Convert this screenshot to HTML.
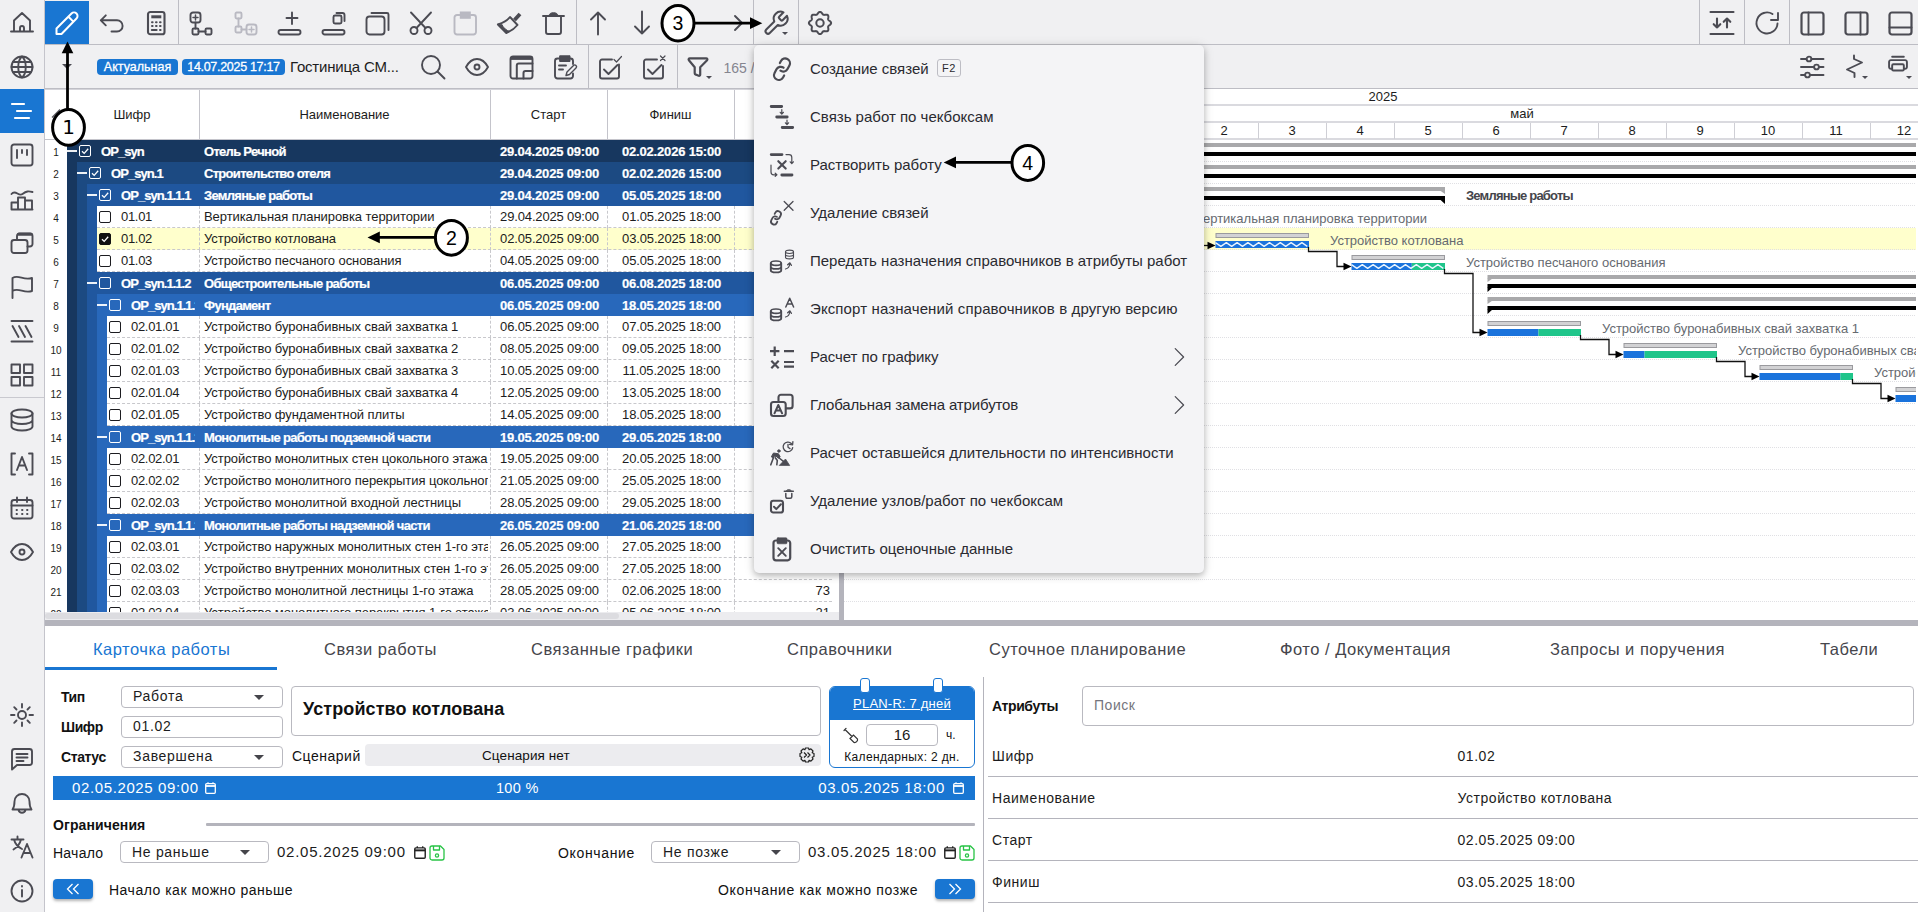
<!DOCTYPE html>
<html lang="ru"><head><meta charset="utf-8"><title>PLAN-R</title>
<style>
*{box-sizing:border-box;margin:0;padding:0}
html,body{width:1918px;height:912px;overflow:hidden;background:#fff}
body{font-family:"Liberation Sans",sans-serif;font-size:13px;color:#1c1c20;position:relative}
.abs{position:absolute}
svg{display:block;overflow:visible}
.ic{position:absolute;width:24px;height:24px;fill:none;stroke:#4b4b53;stroke-width:1.9;stroke-linecap:round;stroke-linejoin:round}
.ic.dis{stroke:#b9b9c2}
.ic.w{stroke:#fff}
#side{left:0;top:0;width:45px;height:912px;background:#f0f0f2;border-right:1px solid #c4c4cb}
#side .act{position:absolute;left:0;top:89px;width:44px;height:44px;background:#1976d2}
#side .hr{position:absolute;left:0;top:397px;width:44px;height:1px;background:#c9c9cf}
#tb1{left:45px;top:0;width:1873px;height:45px;background:#f0f0f2;border-bottom:1px solid #bdbdc4}
#tb2{left:45px;top:45px;width:1873px;height:44px;background:#f0f0f2;border-bottom:1px solid #bdbdc4}
.vs{position:absolute;top:0;width:1px;height:44px;background:#bdbdc4}
#edit{left:45px;top:1px;width:44px;height:43px;background:#1976d2}
.badge{position:absolute;top:59px;height:16px;border-radius:4px;background:#1976d2;color:#fff;font-size:12.5px;line-height:16px;-webkit-text-stroke:.3px #fff;text-align:center;white-space:nowrap}
#pname{left:290px;top:57px;letter-spacing:-.2px;font-size:15px;line-height:20px;color:#1c1c20;white-space:nowrap}
#cnt{left:723.5px;top:57.5px;font-size:14px;line-height:20px;color:#85858f;white-space:nowrap}
/* grid */
#grid{left:45px;top:89px;width:793px;height:523px;background:#fff;overflow:hidden;border-top:1px solid #d4d4da}
.gh{position:absolute;top:-1px;height:51px;border-left:1px solid #c4c4cb;font-size:13px;line-height:52px;padding-right:2px;text-align:center;color:#1c1c20;white-space:nowrap}
#ghb{left:0;top:49px;width:793px;height:1px;background:#c4c4cb}
.rn{position:absolute;left:0;width:22px;height:22px;line-height:22px;font-size:10px;text-align:center;color:#1c1c20;padding-top:2px}
.row{position:absolute;left:22px;width:765px;height:22px;overflow:hidden;white-space:nowrap}
.row .bg{position:absolute;top:0;height:22px;right:0}
.c{position:absolute;top:0;height:22px;line-height:22px;font-size:13px;overflow:hidden;white-space:nowrap}
.sum .c{color:#fff;font-weight:bold;letter-spacing:-0.7px;line-height:24px;-webkit-text-stroke:.2px #fff}
.sum .c.cd{letter-spacing:-0.95px}
.sum .c.d{letter-spacing:-0.17px}
.tsk .c.d{letter-spacing:-0.15px}
.tsk .c.cd{letter-spacing:-0.3px}
.tsk .c.nm{letter-spacing:-0.07px}
.tsk .c{color:#1c1c20}
.tsk .bg{background:#fff;border-bottom:1px dashed #c8c8cc}
.tsk.sel .bg{background:#ffffcc}
.vd{position:absolute;top:0;width:0;height:22px;border-left:1px dashed #c8c8cc}
.cb{position:absolute;top:5px;width:12px;height:12px;border:1px solid #1c1c20;border-radius:2px;background:#fff}
.sum .cb{border-color:#fff;background:transparent}
.cb svg{position:absolute;left:0;top:0;width:10px;height:10px;fill:none;stroke:#fff;stroke-width:1.3}
.cb.k{background:#111;border-color:#111}
.mn{position:absolute;top:10px;width:10px;height:2px;background:#fff;opacity:.92}

#gantt{left:844px;top:89px;width:1074px;height:531px;background:#fff;overflow:hidden}
#gantt .hl{position:absolute;left:0;width:1074px;height:2px;background:#dadadf}
#gantt .hd{position:absolute;font-size:13px;line-height:16px;color:#1c1c20;text-align:center;white-space:nowrap}
#gantt .dv{position:absolute;top:34px;width:1px;height:16px;background:#cfcfd5}
#gantt .rl{position:absolute;left:0;width:1073px;height:0;border-top:1px dotted #e0e0e4}
#gantt .lb{position:absolute;font-size:13px;line-height:16px;color:#666a70;white-space:nowrap}
#gantt .lb.b{font-weight:bold;color:#45454b;letter-spacing:-.8px}

#menu{left:754px;top:45px;width:450px;height:528px;background:#f4f4f6;border-radius:5px;box-shadow:0 3px 6px rgba(0,0,0,.22),0 1px 12px rgba(0,0,0,.12)}
#menu .mi{position:absolute;left:56px;height:20px;line-height:20px;font-size:15px;color:#2a2a30;white-space:nowrap}
#menu .kbd{position:absolute;left:183px;top:14px;width:24px;height:18px;border:1px solid #bdbdc4;border-radius:3px;font-size:11px;line-height:16px;text-align:center;color:#2a2a30;letter-spacing:.5px}

.tab{position:absolute;top:639px;height:20px;line-height:20px;font-size:16.5px;color:#45454b;white-space:nowrap;letter-spacing:.5px}
.tab.on{color:#1976d2}
#tabul{left:45px;top:667px;width:232px;height:3px;background:#1976d2}
.lbl{position:absolute;font-size:14px;line-height:18px;color:#111;white-space:nowrap}
.lbl.b{font-weight:bold;letter-spacing:-.4px}
.inp{position:absolute;height:22px;border:1px solid #b9b9c0;border-radius:4px;background:#fff;font-size:14px;line-height:19px;padding-left:11px;color:#1c1c20;white-space:nowrap;letter-spacing:.7px}
.inp svg{position:absolute;right:18px;top:8px;width:10px;height:5px}
#title{left:291px;top:686px;width:530px;height:50px;border:1px solid #b9b9c0;border-radius:4px;background:#fff;font-size:18px;font-weight:bold;line-height:44px;padding-left:11px;color:#111;letter-spacing:.1px}
#scen{left:365px;top:744px;width:456px;height:22px;border-radius:4px;background:#ececef}
#bar{left:53px;top:776px;width:922px;height:24px;background:#1976d2;color:#fff;font-size:15px;line-height:24px;letter-spacing:.62px}
#card{left:829px;top:686px;width:146px;height:82px;border:1px solid #1976d2;border-radius:6px;background:#fff;overflow:hidden}
#card .hd{position:absolute;left:0;top:0;width:144px;height:33px;background:#1976d2;color:#fff;font-size:13px;line-height:33px;text-align:center;text-decoration:underline;letter-spacing:.2px}
.pin{position:absolute;top:678px;width:10px;height:15px;border:1.500px solid #1976d2;border-radius:3px;background:#fff}
.btn{position:absolute;top:879px;width:40px;height:20px;border-radius:4px;background:#1976d2;box-shadow:0 2px 3px rgba(0,0,0,.3)}
.btn svg{position:absolute;left:13px;top:4px;width:14px;height:12px;fill:none;stroke:#fff;stroke-width:1.300}
.dt{position:absolute;font-size:15px;line-height:20px;color:#1c1c20;white-space:nowrap;letter-spacing:.75px}
.ar{position:absolute;left:988px;width:930px;height:1px;background:#b4b4bc}
.al{position:absolute;font-size:14px;line-height:18px;color:#1c1c20;white-space:nowrap;letter-spacing:.55px}
</style></head>
<body>
<div id="side" class="abs">
<div class="act"></div>
<div class="hr"></div><svg class="ic " viewBox="0 0 24 24" style="left:10px;top:10px;width:24px;height:24px;"><path d="M1 21.5h22M4 21.5V10.5L12 3l8 7.5v11M10 21.5v-3.5a2 2 0 0 1 4 0v3.5"/></svg><svg class="ic " viewBox="0 0 24 24" style="left:10px;top:55px;width:24px;height:24px;"><circle cx="12" cy="12" r="10.5"/><path d="M1.5 12h21M3 7h18M3 17h18M12 1.5c-5 4-5 17 0 21M12 1.5c5 4 5 17 0 21"/></svg><svg class="ic w" viewBox="0 0 24 24" style="left:10px;top:99px;width:24px;height:24px;"><path d="M2 5h12M7 12h14M5 19h14" stroke-width="2.2"/></svg><svg class="ic " viewBox="0 0 24 24" style="left:10px;top:143px;width:24px;height:24px;"><rect x="1.5" y="1.5" width="21" height="21" rx="2.5"/><path d="M7 7v8M12 7v3M17 7v5"/></svg><svg class="ic " viewBox="0 0 24 24" style="left:10px;top:187px;width:24px;height:24px;"><path d="M1.5 7c4-5 7 3 11 0s6-3 10-2M1.5 22.5h21M1.5 22.5v-7h6.5v7M8 22.5v-12h7v12M15 22.5v-9h7v9"/></svg><svg class="ic " viewBox="0 0 24 24" style="left:10px;top:231px;width:24px;height:24px;"><path d="M7 9V5a2.500 2.500 0 0 1 2.500-2.500h10.500a2.500 2.500 0 0 1 2.500 2.500v8a2.500 2.500 0 0 1-2.500 2.500h-2.500"/><path d="M8.500 3.300h12.500" stroke-width="3" /><rect x="1.500" y="9" width="16" height="13" rx="2.500"/></svg><svg class="ic " viewBox="0 0 24 24" style="left:10px;top:275px;width:24px;height:24px;"><path d="M2.500 23V3c6-4 11 3 19.500 0v13c-8 3-13.500-4-19.500 0"/></svg><svg class="ic " viewBox="0 0 24 24" style="left:10px;top:319px;width:24px;height:24px;"><path d="M1.500 2h21M1.500 22.500h21M2.500 7l6 11M9 7l6 11M15.500 7l6 11"/></svg><svg class="ic " viewBox="0 0 24 24" style="left:10px;top:363px;width:24px;height:24px;"><rect x="1.5" y="1.5" width="8.5" height="8.5"/><rect x="14" y="1.5" width="8.5" height="8.5"/><rect x="1.5" y="14" width="8.5" height="8.5"/><rect x="14" y="14" width="8.5" height="8.5"/></svg><svg class="ic " viewBox="0 0 24 24" style="left:10px;top:408px;width:24px;height:24px;"><ellipse cx="12" cy="5.5" rx="10.500" ry="4"/><path d="M1.500 5.500v13c0 2.200 4.700 4 10.500 4s10.500-1.800 10.500-4v-13M1.500 12c0 2.200 4.700 4 10.500 4s10.500-1.800 10.500-4"/></svg><svg class="ic " viewBox="0 0 24 24" style="left:10px;top:452px;width:24px;height:24px;"><path d="M5 1.500H1.500v21H5M19 1.500h3.500v21H19M7 18l5-13 5 13M8.700 13.500h6.600"/></svg><svg class="ic " viewBox="0 0 24 24" style="left:10px;top:496px;width:24px;height:24px;"><rect x="1.500" y="4" width="21" height="18.500" rx="2.500"/><path d="M1.500 9.500h21M7 1.500V6M17 1.500V6"/><path d="M6.500 14h.5M12 14h.5M17 14h.5M6.500 18h.5M12 18h.5M17 18h.5" stroke-width="1.800"/></svg><svg class="ic " viewBox="0 0 24 24" style="left:10px;top:540px;width:24px;height:24px;"><path d="M1 12c3-5.500 7-8 11-8s8 2.500 11 8c-3 5.500-7 8-11 8s-8-2.500-11-8z"/><circle cx="12" cy="12" r="2.500"/></svg><svg class="ic " viewBox="0 0 24 24" style="left:10px;top:703px;width:24px;height:24px;"><circle cx="12" cy="12" r="4"/><path d="M12 1v3.500M12 19.500V23M1 12h3.500M19.500 12H23M4.200 4.200l2.300 2.300M17.500 17.500l2.300 2.300M4.200 19.800l2.300-2.300M17.500 6.500l2.300-2.300"/></svg><svg class="ic " viewBox="0 0 24 24" style="left:10px;top:747px;width:24px;height:24px;"><path d="M2 22.500V4.500a2.500 2.500 0 0 1 2.500-2.500h15a2.500 2.500 0 0 1 2.500 2.500v11a2.500 2.500 0 0 1-2.500 2.500H7z"/><path d="M6.500 7h11M6.500 10.500h11M6.500 14h7"/></svg><svg class="ic " viewBox="0 0 24 24" style="left:10px;top:791px;width:24px;height:24px;"><path d="M2.500 18.500c1.500-2 2-3.500 2-8a7.500 7.500 0 0 1 15 0c0 4.500.5 6 2 8zM8.500 19a3.600 3.600 0 0 0 7 0"/></svg><svg class="ic " viewBox="0 0 24 24" style="left:10px;top:835px;width:24px;height:24px;"><path d="M1.500 4.500h12M7.500 1.500v3M3.500 14.500c4-2.500 6.500-6 7.500-10M4 4.500c1 4 4 7.500 8 9.500M11.500 22.500l5.500-13.500 5.500 13.500M13.500 18h7"/></svg><svg class="ic " viewBox="0 0 24 24" style="left:10px;top:879px;width:24px;height:24px;"><circle cx="12" cy="12" r="10.500"/><path d="M12 11v6.500M12 7v.5" stroke-width="1.900"/></svg></div>
<div id="tb1" class="abs"></div>
<div id="tb2" class="abs"></div>
<div id="edit" class="abs"></div><svg class="ic w" viewBox="0 0 24 24" style="left:55px;top:11px;width:24px;height:24px;"><path d="M1.500 23v-5.500L16.500 2.500a3.400 3.400 0 0 1 5 5L6.500 23zM13.500 5.800l4.800 4.800" stroke-width="2"/></svg><svg class="ic " viewBox="0 0 24 24" style="left:100px;top:11px;width:24px;height:24px;"><path d="M.8 9.300H17a5.600 5.600 0 0 1 0 11.200h-5.500M5.800 4.300l-5 5 5 5"/></svg><svg class="ic " viewBox="0 0 24 24" style="left:144px;top:11px;width:24px;height:24px;"><rect x="4" y="1" width="16.500" height="22.300" rx="2.300" stroke-width="2.100"/><path d="M7.300 5.800h10" stroke-width="3" stroke-linecap="butt"/><path d="M8 11.200h.6M12 11.200h.6M16 11.200h.6M8 15h.6M12 15h.6M16 15h.6M16 19h.6" stroke-width="2"/><path d="M7.800 19h4.800" stroke-width="2"/></svg><svg class="ic " viewBox="0 0 24 24" style="left:189px;top:11px;width:24px;height:24px;"><rect x="1.500" y="1.500" width="10" height="10" rx="2.500"/><path d="M6.500 4v5M4 6.500h5" stroke-width="1.500"/><path d="M6.500 11.500v6M9.500 20.500h7"/><rect x="3.500" y="17.500" width="6" height="6" rx="1.200"/><rect x="16.500" y="17.500" width="6" height="6" rx="1.200"/></svg><svg class="ic dis" viewBox="0 0 24 24" style="left:233px;top:11px;width:24px;height:24px;"><rect x="2.500" y="1.500" width="6" height="6" rx="1.200"/><rect x="2.500" y="15.500" width="6" height="6" rx="1.200"/><path d="M5.500 7.500v8M8.500 18.500h5"/><rect x="13.500" y="13.500" width="10" height="10" rx="2.500"/><path d="M18.500 16v5M16 18.500h5" stroke-width="1.500"/></svg><svg class="ic " viewBox="0 0 24 24" style="left:277px;top:11px;width:24px;height:24px;"><path d="M15 1.500V13M9.500 7h11"/><rect x="1.500" y="19" width="22" height="4.500" rx="2.200"/></svg><svg class="ic " viewBox="0 0 24 24" style="left:321px;top:11px;width:24px;height:24px;"><rect x="1.500" y="19" width="22" height="4.500" rx="2.200"/><rect x="12.500" y="4.500" width="8" height="8" rx="1.500"/><path d="M15.500 2h6a2 2 0 0 1 2 2v6"/></svg><svg class="ic " viewBox="0 0 24 24" style="left:365px;top:11px;width:24px;height:24px;"><rect x="1.500" y="5.500" width="18" height="18" rx="3"/><path d="M6.500 2h15.500a1.500 1.500 0 0 1 1.500 1.500v15.500"/></svg><svg class="ic " viewBox="0 0 24 24" style="left:409px;top:11px;width:24px;height:24px;"><circle cx="5" cy="19.500" r="3.500"/><circle cx="19" cy="19.500" r="3.500"/><path d="M2 1.500L16.500 17M22 1.500L7.500 17"/></svg><svg class="ic dis" viewBox="0 0 24 24" style="left:453px;top:11px;width:24px;height:24px;"><path d="M6.500 4H4a2.500 2.500 0 0 0-2.500 2.500V21A2.500 2.500 0 0 0 4 23.500h16.500A2.500 2.500 0 0 0 23 21V6.500A2.500 2.500 0 0 0 20.500 4H18"/><path d="M6.800 .5h11v7.300h-11z" fill="#b9b9c2" stroke="none"/></svg><svg class="ic " viewBox="0 0 24 24" style="left:497px;top:11px;width:24px;height:24px;"><path d="M23 3l-5.500 6" stroke-width="3.800" stroke-linecap="butt"/><path d="M13 6l7.500 8c-3 3.700-6.800 6.300-11.200 8L.9 13.500C5.500 12 10 9.700 13 6z"/><path d="M.9 13.500l8.400 8.500 3.700-1.600c-3.300-.6-6.600-3.400-8.200-6.900z" fill="#4b4b53" stroke-width="1"/></svg><svg class="ic " viewBox="0 0 24 24" style="left:541px;top:11px;width:24px;height:24px;"><path d="M2 5h21M5 5v16a2 2 0 0 0 2 2h11a2 2 0 0 0 2-2V5"/><path d="M8 4.600c.5-2.200 2-2.900 4.500-2.900s4 .7 4.500 2.900z" fill="#4b4b53" stroke-width="1"/></svg><svg class="ic " viewBox="0 0 24 24" style="left:586px;top:11px;width:24px;height:24px;"><path d="M12 23.500V1.500M5 8.500l7-7 7 7"/></svg><svg class="ic " viewBox="0 0 24 24" style="left:630px;top:11px;width:24px;height:24px;"><path d="M12 .5v22M5 15.500l7 7 7-7"/></svg><svg class="ic " viewBox="0 0 24 24" style="left:674px;top:11px;width:24px;height:24px;"><path d="M23 12H1M8 5l-7 7 7 7"/></svg><svg class="ic " viewBox="0 0 24 24" style="left:719px;top:11px;width:24px;height:24px;"><path d="M1 12h22M16 5l7 7-7 7"/></svg><svg class="ic " viewBox="0 0 24 24" style="left:764px;top:11px;width:24px;height:24px;"><g transform="translate(12,12.300) scale(1.160) translate(-12,-12)" stroke-width="1.750"><path d="M14.700 6.300a1 1 0 0 0 0 1.400l1.600 1.600a1 1 0 0 0 1.400 0l3.770-3.770a6 6 0 0 1-7.940 7.940l-6.910 6.910a2.120 2.120 0 0 1-3-3l6.910-6.910a6 6 0 0 1 7.940-7.940l-3.760 3.760z"/></g></svg><svg class="ic " viewBox="0 0 24 24" style="left:808px;top:11px;width:24px;height:24px;"><path d="M12.00 0.90L12.43 0.96L12.85 1.14L13.25 1.43L13.62 1.79L13.95 2.19L14.26 2.61L14.54 3.00L14.82 3.34L15.10 3.60L15.41 3.78L15.75 3.87L16.14 3.88L16.57 3.84L17.05 3.76L17.56 3.69L18.08 3.63L18.59 3.64L19.07 3.72L19.50 3.89L19.85 4.15L20.11 4.50L20.28 4.93L20.36 5.41L20.37 5.92L20.31 6.44L20.24 6.95L20.16 7.43L20.12 7.86L20.13 8.25L20.22 8.59L20.40 8.90L20.66 9.18L21.00 9.46L21.39 9.74L21.81 10.05L22.21 10.38L22.57 10.75L22.86 11.15L23.04 11.57L23.10 12.00L23.04 12.43L22.86 12.85L22.57 13.25L22.21 13.62L21.81 13.95L21.39 14.26L21.00 14.54L20.66 14.82L20.40 15.10L20.22 15.41L20.13 15.75L20.12 16.14L20.16 16.57L20.24 17.05L20.31 17.56L20.37 18.08L20.36 18.59L20.28 19.07L20.11 19.50L19.85 19.85L19.50 20.11L19.07 20.28L18.59 20.36L18.08 20.37L17.56 20.31L17.05 20.24L16.57 20.16L16.14 20.12L15.75 20.13L15.41 20.22L15.10 20.40L14.82 20.66L14.54 21.00L14.26 21.39L13.95 21.81L13.62 22.21L13.25 22.57L12.85 22.86L12.43 23.04L12.00 23.10L11.57 23.04L11.15 22.86L10.75 22.57L10.38 22.21L10.05 21.81L9.74 21.39L9.46 21.00L9.18 20.66L8.90 20.40L8.59 20.22L8.25 20.13L7.86 20.12L7.43 20.16L6.95 20.24L6.44 20.31L5.92 20.37L5.41 20.36L4.93 20.28L4.50 20.11L4.15 19.85L3.89 19.50L3.72 19.07L3.64 18.59L3.63 18.08L3.69 17.56L3.76 17.05L3.84 16.57L3.88 16.14L3.87 15.75L3.78 15.41L3.60 15.10L3.34 14.82L3.00 14.54L2.61 14.26L2.19 13.95L1.79 13.62L1.43 13.25L1.14 12.85L0.96 12.43L0.90 12.00L0.96 11.57L1.14 11.15L1.43 10.75L1.79 10.38L2.19 10.05L2.61 9.74L3.00 9.46L3.34 9.18L3.60 8.90L3.78 8.59L3.87 8.25L3.88 7.86L3.84 7.43L3.76 6.95L3.69 6.44L3.63 5.92L3.64 5.41L3.72 4.93L3.89 4.50L4.15 4.15L4.50 3.89L4.93 3.72L5.41 3.64L5.92 3.63L6.44 3.69L6.95 3.76L7.43 3.84L7.86 3.88L8.25 3.87L8.59 3.78L8.90 3.60L9.18 3.34L9.46 3.00L9.74 2.61L10.05 2.19L10.38 1.79L10.75 1.43L11.15 1.14L11.57 0.96z" stroke-width="2"/><circle cx="12" cy="12" r="3.700" stroke-width="2"/></svg><svg class="ic " viewBox="0 0 24 24" style="left:1710px;top:11px;width:24px;height:24px;"><path d="M.5 1h23M.5 23h23M7 7.500v9M3.700 13.200l3.300 3.300 3.300-3.300M17 16.500v-9M13.700 10.800l3.300-3.300 3.300 3.300" stroke-width="2.100"/></svg><svg class="ic " viewBox="0 0 24 24" style="left:1755px;top:11px;width:24px;height:24px;"><path d="M22.500 12.500A10.500 10.500 0 1 1 17.500 3M23 2v7h-7"/></svg><svg class="ic " viewBox="0 0 24 24" style="left:1800px;top:11px;width:24px;height:24px;"><rect x="1.500" y="1.500" width="22" height="22" rx="2.500" stroke-width="2.200"/><path d="M8.500 1.500v22"/></svg><svg class="ic " viewBox="0 0 24 24" style="left:1844px;top:11px;width:24px;height:24px;"><rect x="1.500" y="1.500" width="22" height="22" rx="2.500" stroke-width="2.200"/><path d="M16.500 1.500v22"/></svg><svg class="ic " viewBox="0 0 24 24" style="left:1888px;top:11px;width:24px;height:24px;"><rect x="1.500" y="1.500" width="22" height="22" rx="2.500" stroke-width="2.200"/><path d="M1.500 16.500h22"/></svg>
<div class="vs" style="left:178px"></div>
<div class="vs" style="left:576px"></div>
<div class="vs" style="left:753px"></div>
<div class="vs" style="left:798px"></div>
<div class="vs" style="left:1699px"></div>
<div class="vs" style="left:1744px"></div>
<div class="vs" style="left:1789px"></div>
<svg class="abs" style="left:782px;top:31.5px;width:6px;height:3px" viewBox="0 0 6 3"><path d="M0 0h6L3 3z" fill="#4b4b53"/></svg><svg class="ic " viewBox="0 0 24 24" style="left:421px;top:55px;width:24px;height:24px;"><circle cx="10" cy="10" r="9"/><path d="M16.500 16.500l7 7"/></svg><svg class="ic " viewBox="0 0 24 24" style="left:465px;top:55px;width:24px;height:24px;"><path d="M1 12c3-5.500 7-8 11-8s8 2.500 11 8c-3 5.500-7 8-11 8s-8-2.500-11-8z"/><circle cx="12" cy="12" r="2.500"/></svg><svg class="ic " viewBox="0 0 24 24" style="left:509px;top:55px;width:24px;height:24px;"><rect x="1.500" y="1.500" width="22" height="22" rx="2.500"/><path d="M1.500 3.300h22" stroke-width="3.200" stroke-linecap="butt"/><path d="M7.800 23.500V10.500a2 2 0 0 1 2-2h13.700M14.500 23.500V18a2 2 0 0 1 2-2h7" stroke-width="2"/></svg><svg class="ic " viewBox="0 0 24 24" style="left:553px;top:55px;width:24px;height:24px;"><path d="M6.500 3.500H4.500a2.500 2.500 0 0 0-2.500 2.500v15a2.500 2.500 0 0 0 2.500 2.500h13a2.500 2.500 0 0 0 2.500-2.500v-2.500M17.500 3.500h0a2.500 2.500 0 0 1 2.500 2.500v3"/><path d="M7 .8h10v5.700H7z" fill="#4b4b53" stroke-width="1"/><path d="M6 10.500h7M6 14.500h4"/><path d="M13 20.500l1-3.500 6.500-6.500a1.700 1.700 0 0 1 2.500 2.500L16.500 19.500z" stroke-width="1.400"/></svg><svg class="ic " viewBox="0 0 24 24" style="left:598px;top:55px;width:24px;height:24px;"><path d="M21 9.500v12a2 2 0 0 1-2 2H4a2 2 0 0 1-2-2v-15a2 2 0 0 1 2-2h10"/><path d="M6 14.500l4.500 4.500 9-9" stroke-width="1.900"/><path d="M16 4.500l2.500 2.500 5-5.500" stroke-width="1.200"/></svg><svg class="ic " viewBox="0 0 24 24" style="left:642px;top:55px;width:24px;height:24px;"><path d="M21 11v10.500a2 2 0 0 1-2 2H4a2 2 0 0 1-2-2v-15a2 2 0 0 1 2-2h11"/><path d="M6 14.500l4.500 4.500 9-9" stroke-width="1.900"/><path d="M18.500 1l4.500 4.500M23 1l-4.500 4.500" stroke-width="1.200"/></svg><svg class="ic " viewBox="0 0 24 24" style="left:685.8px;top:55px;width:24px;height:24px;"><path d="M3.800 3.300H20.200a1.200 1.200 0 0 1 .9 2L14.200 12.300V19.800a1.100 1.100 0 0 1-1.500 1L9.700 19.600a1.500 1.500 0 0 1-1-1.400V12.300L2.900 5.300a1.200 1.200 0 0 1 .9-2z" stroke-width="2.200"/></svg><svg class="ic " viewBox="0 0 24 24" style="left:1800px;top:55px;width:24px;height:24px;"><path d="M1 4h5.500M11.500 4h12M1 12h13M19 12h4.500M1 20h4M10 20h13.500"/><circle cx="9" cy="4" r="2.400"/><circle cx="16.500" cy="12" r="2.400"/><circle cx="7.500" cy="20" r="2.400"/></svg><svg class="ic " viewBox="0 0 24 24" style="left:1845px;top:55px;width:24px;height:24px;"><path d="M9 .5v3.500l8 3.500-15 7 7.500 3.500v4"/></svg>
<div class="vs" style="left:588px;top:45px"></div>
<div class="vs" style="left:677px;top:45px"></div>
<svg class="abs" style="left:705.8px;top:75.5px;width:6px;height:3px" viewBox="0 0 6 3"><path d="M0 0h6L3 3z" fill="#4b4b53"/></svg><svg class="ic " viewBox="0 0 24 24" style="left:1887.7px;top:55px;width:20px;height:20px;"><path d="M5 2h14M4.500 16.500h-1a2.200 2.200 0 0 1-2.200-2.200v-6a2.200 2.200 0 0 1 2.200-2.200h17a2.200 2.200 0 0 1 2.200 2.200v6a2.200 2.200 0 0 1-2.200 2.200h-1" stroke-width="2.300"/><rect x="5" y="11" width="14" height="7.500" rx="1.500" stroke-width="2.300"/></svg>
<svg class="abs" style="left:1862px;top:76px;width:6px;height:3px" viewBox="0 0 6 3"><path d="M0 0h6L3 3z" fill="#4b4b53"/></svg>
<svg class="abs" style="left:1906px;top:76px;width:6px;height:3px" viewBox="0 0 6 3"><path d="M0 0h6L3 3z" fill="#4b4b53"/></svg>
<svg class="abs" style="left:62px;top:64px;width:10px;height:5px" viewBox="0 0 10 5"><path d="M0 0h10L5 5z" fill="#4b4b53"/></svg>
<div class="badge" style="left:97px;width:81px">Актуальная</div>
<div class="badge" style="left:182px;width:103px;letter-spacing:-.3px">14.07.2025 17:17</div>
<div id="pname" class="abs">Гостиница СМ...</div>
<div id="cnt" class="abs">165 / 165</div>
<div id="grid" class="abs">
<div class="gh" style="left:21px;width:134px;border-left:0">Шифр</div>
<div class="gh" style="left:154px;width:292px">Наименование</div>
<div class="gh" style="left:445px;width:118px">Старт</div>
<div class="gh" style="left:562px;width:128px">Финиш</div>
<div class="gh" style="left:689px;width:104px"></div>
<div id="ghb" class="abs"></div>
<div class="rn" style="top:50px">1</div>
<div class="row sum" style="top:50px">
<div class="bg" style="left:0px;background:#17375f"></div>
<div class="mn" style="left:0px"></div>
<div class="cb" style="left:12px"><svg viewBox="0 0 10 10"><path d="M2 5.200l2.200 2.200L8.200 2.800"/></svg></div>
<div class="c cd" style="left:34px;width:94px">OP_syn</div>
<div class="c nm" style="left:137px;width:284px">Отель Речной</div>
<div class="c d" style="left:424px;width:117px;text-align:center">29.04.2025 09:00</div>
<div class="c d" style="left:541px;width:127px;text-align:center">02.02.2026 15:00</div></div>
<div class="rn" style="top:72px">2</div>
<div class="row sum" style="top:72px">
<div class="abs" style="left:0px;top:0;width:10px;height:22px;background:#17375f"></div>
<div class="bg" style="left:10px;background:#1c4a82"></div>
<div class="mn" style="left:10px"></div>
<div class="cb" style="left:22px"><svg viewBox="0 0 10 10"><path d="M2 5.200l2.200 2.200L8.200 2.800"/></svg></div>
<div class="c cd" style="left:44px;width:84px">OP_syn.1</div>
<div class="c nm" style="left:137px;width:284px">Строительство отеля</div>
<div class="c d" style="left:424px;width:117px;text-align:center">29.04.2025 09:00</div>
<div class="c d" style="left:541px;width:127px;text-align:center">02.02.2026 15:00</div></div>
<div class="rn" style="top:94px">3</div>
<div class="row sum" style="top:94px">
<div class="abs" style="left:0px;top:0;width:10px;height:22px;background:#17375f"></div>
<div class="abs" style="left:10px;top:0;width:10px;height:22px;background:#1c4a82"></div>
<div class="bg" style="left:20px;background:#20579f"></div>
<div class="mn" style="left:20px"></div>
<div class="cb" style="left:32px"><svg viewBox="0 0 10 10"><path d="M2 5.200l2.200 2.200L8.200 2.800"/></svg></div>
<div class="c cd" style="left:54px;width:74px">OP_syn.1.1.1</div>
<div class="c nm" style="left:137px;width:284px">Земляные работы</div>
<div class="c d" style="left:424px;width:117px;text-align:center">29.04.2025 09:00</div>
<div class="c d" style="left:541px;width:127px;text-align:center">05.05.2025 18:00</div></div>
<div class="rn" style="top:116px">4</div>
<div class="row tsk" style="top:116px">
<div class="abs" style="left:0px;top:0;width:10px;height:22px;background:#17375f"></div>
<div class="abs" style="left:10px;top:0;width:10px;height:22px;background:#1c4a82"></div>
<div class="abs" style="left:20px;top:0;width:10px;height:22px;background:#20579f"></div>
<div class="bg" style="left:30px"></div>
<div class="cb" style="left:32px"></div>
<div class="c cd" style="left:54px;width:74px">01.01</div>
<div class="c nm" style="left:137px;width:284px">Вертикальная планировка территории</div>
<div class="c d" style="left:424px;width:117px;text-align:center">29.04.2025 09:00</div>
<div class="c d" style="left:541px;width:127px;text-align:center">01.05.2025 18:00</div>
<div class="vd" style="left:132px"></div>
<div class="vd" style="left:423px"></div>
<div class="vd" style="left:540px"></div>
<div class="vd" style="left:667px"></div></div>
<div class="rn" style="top:138px">5</div>
<div class="row tsk sel" style="top:138px">
<div class="abs" style="left:0px;top:0;width:10px;height:22px;background:#17375f"></div>
<div class="abs" style="left:10px;top:0;width:10px;height:22px;background:#1c4a82"></div>
<div class="abs" style="left:20px;top:0;width:10px;height:22px;background:#20579f"></div>
<div class="bg" style="left:30px"></div>
<div class="cb k" style="left:32px"><svg viewBox="0 0 10 10"><path d="M2 5.200l2.200 2.200L8.200 2.800"/></svg></div>
<div class="c cd" style="left:54px;width:74px">01.02</div>
<div class="c nm" style="left:137px;width:284px">Устройство котлована</div>
<div class="c d" style="left:424px;width:117px;text-align:center">02.05.2025 09:00</div>
<div class="c d" style="left:541px;width:127px;text-align:center">03.05.2025 18:00</div>
<div class="vd" style="left:132px"></div>
<div class="vd" style="left:423px"></div>
<div class="vd" style="left:540px"></div>
<div class="vd" style="left:667px"></div></div>
<div class="rn" style="top:160px">6</div>
<div class="row tsk" style="top:160px">
<div class="abs" style="left:0px;top:0;width:10px;height:22px;background:#17375f"></div>
<div class="abs" style="left:10px;top:0;width:10px;height:22px;background:#1c4a82"></div>
<div class="abs" style="left:20px;top:0;width:10px;height:22px;background:#20579f"></div>
<div class="bg" style="left:30px"></div>
<div class="cb" style="left:32px"></div>
<div class="c cd" style="left:54px;width:74px">01.03</div>
<div class="c nm" style="left:137px;width:284px">Устройство песчаного основания</div>
<div class="c d" style="left:424px;width:117px;text-align:center">04.05.2025 09:00</div>
<div class="c d" style="left:541px;width:127px;text-align:center">05.05.2025 18:00</div>
<div class="vd" style="left:132px"></div>
<div class="vd" style="left:423px"></div>
<div class="vd" style="left:540px"></div>
<div class="vd" style="left:667px"></div></div>
<div class="rn" style="top:182px">7</div>
<div class="row sum" style="top:182px">
<div class="abs" style="left:0px;top:0;width:10px;height:22px;background:#17375f"></div>
<div class="abs" style="left:10px;top:0;width:10px;height:22px;background:#1c4a82"></div>
<div class="bg" style="left:20px;background:#20579f"></div>
<div class="mn" style="left:20px"></div>
<div class="cb" style="left:32px"></div>
<div class="c cd" style="left:54px;width:74px">OP_syn.1.1.2</div>
<div class="c nm" style="left:137px;width:284px">Общестроительные работы</div>
<div class="c d" style="left:424px;width:117px;text-align:center">06.05.2025 09:00</div>
<div class="c d" style="left:541px;width:127px;text-align:center">06.08.2025 18:00</div></div>
<div class="rn" style="top:204px">8</div>
<div class="row sum" style="top:204px">
<div class="abs" style="left:0px;top:0;width:10px;height:22px;background:#17375f"></div>
<div class="abs" style="left:10px;top:0;width:10px;height:22px;background:#1c4a82"></div>
<div class="abs" style="left:20px;top:0;width:10px;height:22px;background:#20579f"></div>
<div class="bg" style="left:30px;background:#2868bb"></div>
<div class="mn" style="left:30px"></div>
<div class="cb" style="left:42px"></div>
<div class="c cd" style="left:64px;width:64px">OP_syn.1.1.2.1</div>
<div class="c nm" style="left:137px;width:284px">Фундамент</div>
<div class="c d" style="left:424px;width:117px;text-align:center">06.05.2025 09:00</div>
<div class="c d" style="left:541px;width:127px;text-align:center">18.05.2025 18:00</div></div>
<div class="rn" style="top:226px">9</div>
<div class="row tsk" style="top:226px">
<div class="abs" style="left:0px;top:0;width:10px;height:22px;background:#17375f"></div>
<div class="abs" style="left:10px;top:0;width:10px;height:22px;background:#1c4a82"></div>
<div class="abs" style="left:20px;top:0;width:10px;height:22px;background:#20579f"></div>
<div class="abs" style="left:30px;top:0;width:10px;height:22px;background:#2868bb"></div>
<div class="bg" style="left:40px"></div>
<div class="cb" style="left:42px"></div>
<div class="c cd" style="left:64px;width:64px">02.01.01</div>
<div class="c nm" style="left:137px;width:284px">Устройство буронабивных свай захватка 1</div>
<div class="c d" style="left:424px;width:117px;text-align:center">06.05.2025 09:00</div>
<div class="c d" style="left:541px;width:127px;text-align:center">07.05.2025 18:00</div>
<div class="vd" style="left:132px"></div>
<div class="vd" style="left:423px"></div>
<div class="vd" style="left:540px"></div>
<div class="vd" style="left:667px"></div></div>
<div class="rn" style="top:248px">10</div>
<div class="row tsk" style="top:248px">
<div class="abs" style="left:0px;top:0;width:10px;height:22px;background:#17375f"></div>
<div class="abs" style="left:10px;top:0;width:10px;height:22px;background:#1c4a82"></div>
<div class="abs" style="left:20px;top:0;width:10px;height:22px;background:#20579f"></div>
<div class="abs" style="left:30px;top:0;width:10px;height:22px;background:#2868bb"></div>
<div class="bg" style="left:40px"></div>
<div class="cb" style="left:42px"></div>
<div class="c cd" style="left:64px;width:64px">02.01.02</div>
<div class="c nm" style="left:137px;width:284px">Устройство буронабивных свай захватка 2</div>
<div class="c d" style="left:424px;width:117px;text-align:center">08.05.2025 09:00</div>
<div class="c d" style="left:541px;width:127px;text-align:center">09.05.2025 18:00</div>
<div class="vd" style="left:132px"></div>
<div class="vd" style="left:423px"></div>
<div class="vd" style="left:540px"></div>
<div class="vd" style="left:667px"></div></div>
<div class="rn" style="top:270px">11</div>
<div class="row tsk" style="top:270px">
<div class="abs" style="left:0px;top:0;width:10px;height:22px;background:#17375f"></div>
<div class="abs" style="left:10px;top:0;width:10px;height:22px;background:#1c4a82"></div>
<div class="abs" style="left:20px;top:0;width:10px;height:22px;background:#20579f"></div>
<div class="abs" style="left:30px;top:0;width:10px;height:22px;background:#2868bb"></div>
<div class="bg" style="left:40px"></div>
<div class="cb" style="left:42px"></div>
<div class="c cd" style="left:64px;width:64px">02.01.03</div>
<div class="c nm" style="left:137px;width:284px">Устройство буронабивных свай захватка 3</div>
<div class="c d" style="left:424px;width:117px;text-align:center">10.05.2025 09:00</div>
<div class="c d" style="left:541px;width:127px;text-align:center">11.05.2025 18:00</div>
<div class="vd" style="left:132px"></div>
<div class="vd" style="left:423px"></div>
<div class="vd" style="left:540px"></div>
<div class="vd" style="left:667px"></div></div>
<div class="rn" style="top:292px">12</div>
<div class="row tsk" style="top:292px">
<div class="abs" style="left:0px;top:0;width:10px;height:22px;background:#17375f"></div>
<div class="abs" style="left:10px;top:0;width:10px;height:22px;background:#1c4a82"></div>
<div class="abs" style="left:20px;top:0;width:10px;height:22px;background:#20579f"></div>
<div class="abs" style="left:30px;top:0;width:10px;height:22px;background:#2868bb"></div>
<div class="bg" style="left:40px"></div>
<div class="cb" style="left:42px"></div>
<div class="c cd" style="left:64px;width:64px">02.01.04</div>
<div class="c nm" style="left:137px;width:284px">Устройство буронабивных свай захватка 4</div>
<div class="c d" style="left:424px;width:117px;text-align:center">12.05.2025 09:00</div>
<div class="c d" style="left:541px;width:127px;text-align:center">13.05.2025 18:00</div>
<div class="vd" style="left:132px"></div>
<div class="vd" style="left:423px"></div>
<div class="vd" style="left:540px"></div>
<div class="vd" style="left:667px"></div></div>
<div class="rn" style="top:314px">13</div>
<div class="row tsk" style="top:314px">
<div class="abs" style="left:0px;top:0;width:10px;height:22px;background:#17375f"></div>
<div class="abs" style="left:10px;top:0;width:10px;height:22px;background:#1c4a82"></div>
<div class="abs" style="left:20px;top:0;width:10px;height:22px;background:#20579f"></div>
<div class="abs" style="left:30px;top:0;width:10px;height:22px;background:#2868bb"></div>
<div class="bg" style="left:40px"></div>
<div class="cb" style="left:42px"></div>
<div class="c cd" style="left:64px;width:64px">02.01.05</div>
<div class="c nm" style="left:137px;width:284px">Устройство фундаментной плиты</div>
<div class="c d" style="left:424px;width:117px;text-align:center">14.05.2025 09:00</div>
<div class="c d" style="left:541px;width:127px;text-align:center">18.05.2025 18:00</div>
<div class="vd" style="left:132px"></div>
<div class="vd" style="left:423px"></div>
<div class="vd" style="left:540px"></div>
<div class="vd" style="left:667px"></div></div>
<div class="rn" style="top:336px">14</div>
<div class="row sum" style="top:336px">
<div class="abs" style="left:0px;top:0;width:10px;height:22px;background:#17375f"></div>
<div class="abs" style="left:10px;top:0;width:10px;height:22px;background:#1c4a82"></div>
<div class="abs" style="left:20px;top:0;width:10px;height:22px;background:#20579f"></div>
<div class="bg" style="left:30px;background:#2868bb"></div>
<div class="mn" style="left:30px"></div>
<div class="cb" style="left:42px"></div>
<div class="c cd" style="left:64px;width:64px">OP_syn.1.1.2.2</div>
<div class="c nm" style="left:137px;width:284px">Монолитные работы подземной части</div>
<div class="c d" style="left:424px;width:117px;text-align:center">19.05.2025 09:00</div>
<div class="c d" style="left:541px;width:127px;text-align:center">29.05.2025 18:00</div></div>
<div class="rn" style="top:358px">15</div>
<div class="row tsk" style="top:358px">
<div class="abs" style="left:0px;top:0;width:10px;height:22px;background:#17375f"></div>
<div class="abs" style="left:10px;top:0;width:10px;height:22px;background:#1c4a82"></div>
<div class="abs" style="left:20px;top:0;width:10px;height:22px;background:#20579f"></div>
<div class="abs" style="left:30px;top:0;width:10px;height:22px;background:#2868bb"></div>
<div class="bg" style="left:40px"></div>
<div class="cb" style="left:42px"></div>
<div class="c cd" style="left:64px;width:64px">02.02.01</div>
<div class="c nm" style="left:137px;width:284px">Устройство монолитных стен цокольного этажа</div>
<div class="c d" style="left:424px;width:117px;text-align:center">19.05.2025 09:00</div>
<div class="c d" style="left:541px;width:127px;text-align:center">20.05.2025 18:00</div>
<div class="vd" style="left:132px"></div>
<div class="vd" style="left:423px"></div>
<div class="vd" style="left:540px"></div>
<div class="vd" style="left:667px"></div></div>
<div class="rn" style="top:380px">16</div>
<div class="row tsk" style="top:380px">
<div class="abs" style="left:0px;top:0;width:10px;height:22px;background:#17375f"></div>
<div class="abs" style="left:10px;top:0;width:10px;height:22px;background:#1c4a82"></div>
<div class="abs" style="left:20px;top:0;width:10px;height:22px;background:#20579f"></div>
<div class="abs" style="left:30px;top:0;width:10px;height:22px;background:#2868bb"></div>
<div class="bg" style="left:40px"></div>
<div class="cb" style="left:42px"></div>
<div class="c cd" style="left:64px;width:64px">02.02.02</div>
<div class="c nm" style="left:137px;width:284px">Устройство монолитного перекрытия цокольного этажа</div>
<div class="c d" style="left:424px;width:117px;text-align:center">21.05.2025 09:00</div>
<div class="c d" style="left:541px;width:127px;text-align:center">25.05.2025 18:00</div>
<div class="vd" style="left:132px"></div>
<div class="vd" style="left:423px"></div>
<div class="vd" style="left:540px"></div>
<div class="vd" style="left:667px"></div></div>
<div class="rn" style="top:402px">17</div>
<div class="row tsk" style="top:402px">
<div class="abs" style="left:0px;top:0;width:10px;height:22px;background:#17375f"></div>
<div class="abs" style="left:10px;top:0;width:10px;height:22px;background:#1c4a82"></div>
<div class="abs" style="left:20px;top:0;width:10px;height:22px;background:#20579f"></div>
<div class="abs" style="left:30px;top:0;width:10px;height:22px;background:#2868bb"></div>
<div class="bg" style="left:40px"></div>
<div class="cb" style="left:42px"></div>
<div class="c cd" style="left:64px;width:64px">02.02.03</div>
<div class="c nm" style="left:137px;width:284px">Устройство монолитной входной лестницы</div>
<div class="c d" style="left:424px;width:117px;text-align:center">28.05.2025 09:00</div>
<div class="c d" style="left:541px;width:127px;text-align:center">29.05.2025 18:00</div>
<div class="vd" style="left:132px"></div>
<div class="vd" style="left:423px"></div>
<div class="vd" style="left:540px"></div>
<div class="vd" style="left:667px"></div></div>
<div class="rn" style="top:424px">18</div>
<div class="row sum" style="top:424px">
<div class="abs" style="left:0px;top:0;width:10px;height:22px;background:#17375f"></div>
<div class="abs" style="left:10px;top:0;width:10px;height:22px;background:#1c4a82"></div>
<div class="abs" style="left:20px;top:0;width:10px;height:22px;background:#20579f"></div>
<div class="bg" style="left:30px;background:#2868bb"></div>
<div class="mn" style="left:30px"></div>
<div class="cb" style="left:42px"></div>
<div class="c cd" style="left:64px;width:64px">OP_syn.1.1.2.3</div>
<div class="c nm" style="left:137px;width:284px">Монолитные работы надземной части</div>
<div class="c d" style="left:424px;width:117px;text-align:center">26.05.2025 09:00</div>
<div class="c d" style="left:541px;width:127px;text-align:center">21.06.2025 18:00</div></div>
<div class="rn" style="top:446px">19</div>
<div class="row tsk" style="top:446px">
<div class="abs" style="left:0px;top:0;width:10px;height:22px;background:#17375f"></div>
<div class="abs" style="left:10px;top:0;width:10px;height:22px;background:#1c4a82"></div>
<div class="abs" style="left:20px;top:0;width:10px;height:22px;background:#20579f"></div>
<div class="abs" style="left:30px;top:0;width:10px;height:22px;background:#2868bb"></div>
<div class="bg" style="left:40px"></div>
<div class="cb" style="left:42px"></div>
<div class="c cd" style="left:64px;width:64px">02.03.01</div>
<div class="c nm" style="left:137px;width:284px">Устройство наружных монолитных стен 1-го этажа</div>
<div class="c d" style="left:424px;width:117px;text-align:center">26.05.2025 09:00</div>
<div class="c d" style="left:541px;width:127px;text-align:center">27.05.2025 18:00</div>
<div class="vd" style="left:132px"></div>
<div class="vd" style="left:423px"></div>
<div class="vd" style="left:540px"></div>
<div class="vd" style="left:667px"></div></div>
<div class="rn" style="top:468px">20</div>
<div class="row tsk" style="top:468px">
<div class="abs" style="left:0px;top:0;width:10px;height:22px;background:#17375f"></div>
<div class="abs" style="left:10px;top:0;width:10px;height:22px;background:#1c4a82"></div>
<div class="abs" style="left:20px;top:0;width:10px;height:22px;background:#20579f"></div>
<div class="abs" style="left:30px;top:0;width:10px;height:22px;background:#2868bb"></div>
<div class="bg" style="left:40px"></div>
<div class="cb" style="left:42px"></div>
<div class="c cd" style="left:64px;width:64px">02.03.02</div>
<div class="c nm" style="left:137px;width:284px">Устройство внутренних монолитных стен 1-го этажа</div>
<div class="c d" style="left:424px;width:117px;text-align:center">26.05.2025 09:00</div>
<div class="c d" style="left:541px;width:127px;text-align:center">27.05.2025 18:00</div>
<div class="vd" style="left:132px"></div>
<div class="vd" style="left:423px"></div>
<div class="vd" style="left:540px"></div>
<div class="vd" style="left:667px"></div></div>
<div class="rn" style="top:490px">21</div>
<div class="row tsk" style="top:490px">
<div class="abs" style="left:0px;top:0;width:10px;height:22px;background:#17375f"></div>
<div class="abs" style="left:10px;top:0;width:10px;height:22px;background:#1c4a82"></div>
<div class="abs" style="left:20px;top:0;width:10px;height:22px;background:#20579f"></div>
<div class="abs" style="left:30px;top:0;width:10px;height:22px;background:#2868bb"></div>
<div class="bg" style="left:40px"></div>
<div class="cb" style="left:42px"></div>
<div class="c cd" style="left:64px;width:64px">02.03.03</div>
<div class="c nm" style="left:137px;width:284px">Устройство монолитной лестницы 1-го этажа</div>
<div class="c d" style="left:424px;width:117px;text-align:center">28.05.2025 09:00</div>
<div class="c d" style="left:541px;width:127px;text-align:center">02.06.2025 18:00</div>
<div class="c" style="left:667px;width:96px;text-align:right">73</div>
<div class="vd" style="left:132px"></div>
<div class="vd" style="left:423px"></div>
<div class="vd" style="left:540px"></div>
<div class="vd" style="left:667px"></div></div>
<div class="rn" style="top:512px">22</div>
<div class="row tsk" style="top:512px">
<div class="abs" style="left:0px;top:0;width:10px;height:22px;background:#17375f"></div>
<div class="abs" style="left:10px;top:0;width:10px;height:22px;background:#1c4a82"></div>
<div class="abs" style="left:20px;top:0;width:10px;height:22px;background:#20579f"></div>
<div class="abs" style="left:30px;top:0;width:10px;height:22px;background:#2868bb"></div>
<div class="bg" style="left:40px"></div>
<div class="cb" style="left:42px"></div>
<div class="c cd" style="left:64px;width:64px">02.03.04</div>
<div class="c nm" style="left:137px;width:284px">Устройство монолитного перекрытия 1-го этажа</div>
<div class="c d" style="left:424px;width:117px;text-align:center">03.06.2025 09:00</div>
<div class="c d" style="left:541px;width:127px;text-align:center">05.06.2025 18:00</div>
<div class="c" style="left:667px;width:96px;text-align:right">21</div>
<div class="vd" style="left:132px"></div>
<div class="vd" style="left:423px"></div>
<div class="vd" style="left:540px"></div>
<div class="vd" style="left:667px"></div></div></div>
<div class="abs" style="left:45px;top:612px;width:794px;height:8px;background:#ececef"></div>
<div class="abs" style="left:45px;top:613px;width:574px;height:6px;background:#dcdce0;border-radius:3px"></div>
<div class="abs" style="left:839px;top:89px;width:5px;height:531px;background:#b4b4bc"></div>
<div class="abs" style="left:45px;top:620px;width:1873px;height:6px;background:#b4b4bc"></div>
<div id="gantt" class="abs">
<div class="hl" style="top:15px"></div>
<div class="hl" style="top:32px"></div>
<div class="hl" style="top:49px"></div>
<div class="hd" style="left:509px;top:0;width:60px">2025</div>
<div class="hd" style="left:648px;top:17px;width:60px">май</div>
<div class="hd" style="left:360px;top:34px;width:40px">2</div>
<div class="dv" style="left:346px"></div>
<div class="hd" style="left:428px;top:34px;width:40px">3</div>
<div class="dv" style="left:414px"></div>
<div class="hd" style="left:496px;top:34px;width:40px">4</div>
<div class="dv" style="left:482px"></div>
<div class="hd" style="left:564px;top:34px;width:40px">5</div>
<div class="dv" style="left:550px"></div>
<div class="hd" style="left:632px;top:34px;width:40px">6</div>
<div class="dv" style="left:618px"></div>
<div class="hd" style="left:700px;top:34px;width:40px">7</div>
<div class="dv" style="left:686px"></div>
<div class="hd" style="left:768px;top:34px;width:40px">8</div>
<div class="dv" style="left:754px"></div>
<div class="hd" style="left:836px;top:34px;width:40px">9</div>
<div class="dv" style="left:822px"></div>
<div class="hd" style="left:904px;top:34px;width:40px">10</div>
<div class="dv" style="left:890px"></div>
<div class="hd" style="left:972px;top:34px;width:40px">11</div>
<div class="dv" style="left:958px"></div>
<div class="hd" style="left:1040px;top:34px;width:40px">12</div>
<div class="dv" style="left:1026px"></div>
<div class="abs" style="left:0;top:139px;width:1073px;height:22px;background:#ffffcc"></div>
<div class="rl" style="top:72px"></div>
<div class="rl" style="top:94px"></div>
<div class="rl" style="top:116px"></div>
<div class="rl" style="top:138px"></div>
<div class="rl" style="top:160px"></div>
<div class="rl" style="top:182px"></div>
<div class="rl" style="top:204px"></div>
<div class="rl" style="top:226px"></div>
<div class="rl" style="top:248px"></div>
<div class="rl" style="top:270px"></div>
<div class="rl" style="top:292px"></div>
<div class="rl" style="top:314px"></div>
<div class="rl" style="top:336px"></div>
<div class="rl" style="top:358px"></div>
<div class="rl" style="top:380px"></div>
<div class="rl" style="top:402px"></div>
<div class="rl" style="top:424px"></div>
<div class="rl" style="top:446px"></div>
<div class="rl" style="top:468px"></div>
<div class="rl" style="top:490px"></div>
<div class="rl" style="top:512px"></div>
<div class="rl" style="top:534px"></div>
<svg class="abs" style="left:0;top:0;width:1073px;height:531px" viewBox="844 89 1073 531"><defs><pattern id="wv" x="1215" y="0" width="11" height="7" patternUnits="userSpaceOnUse"><path d="M0 2.200C2.700 2.200 2.800 5.300 5.500 5.300S8.300 2.200 11 2.200" fill="none" stroke="#e8f4ff" stroke-width="1.100"/></pattern></defs><rect x="845" y="143" width="1071" height="4" fill="#a9a9ab"/><rect x="845" y="152" width="1071" height="4" fill="#000"/><rect x="845" y="165" width="1071" height="4" fill="#a9a9ab"/><rect x="845" y="174" width="1071" height="4" fill="#000"/><rect x="845" y="187" width="600" height="4" fill="#a9a9ab"/><path d="M1445 190.5h-5l5 3.5z" fill="#a9a9ab"/><rect x="845" y="196" width="600" height="4" fill="#000"/><path d="M1445 199.5h-5l5 4.5z" fill="#000"/><rect x="1487.5" y="275" width="442.5" height="4" fill="#a9a9ab"/><path d="M1487.5 278.5h5l-5 3.5z" fill="#a9a9ab"/><rect x="1487.5" y="284" width="442.5" height="4" fill="#000"/><path d="M1487.5 287.5h5l-5 4.5z" fill="#000"/><rect x="1487.5" y="297" width="442.5" height="4" fill="#a9a9ab"/><path d="M1487.5 300.5h5l-5 3.5z" fill="#a9a9ab"/><rect x="1487.5" y="306" width="442.5" height="4" fill="#000"/><path d="M1487.5 309.5h5l-5 4.5z" fill="#000"/><rect x="1216" y="233.5" width="92.5" height="4" fill="#d2d2d4" stroke="#9a9a9e" stroke-width="1"/><rect x="1215.5" y="241" width="93.5" height="7" fill="#1a73dc"/><path d="M1215.5 242.6L1220.9 246.4L1226.3 242.6L1231.7 246.4L1237.1 242.6L1242.5 246.4L1247.9 242.6L1253.3 246.4L1258.7 242.6L1264.1 246.4L1269.5 242.6L1274.9 246.4L1280.3 242.6L1285.7 246.4L1291.1 242.6L1296.5 246.4L1301.9 242.6L1307.3 246.4" fill="none" stroke="#eaf5ff" stroke-width="1.300" stroke-linejoin="round"/><rect x="1352" y="255.5" width="92.5" height="4" fill="#d2d2d4" stroke="#9a9a9e" stroke-width="1"/><rect x="1351.5" y="263" width="60.3075" height="7" fill="#1a73dc"/><rect x="1411.81" y="263" width="33.1925" height="7" fill="#1fc58a"/><path d="M1351.5 264.6L1356.9 268.4L1362.3 264.6L1367.7 268.4L1373.1 264.6L1378.5 268.4L1383.9 264.6L1389.3 268.4L1394.7 264.6L1400.1 268.4L1405.5 264.6L1410.9 268.4L1416.3 264.6L1421.7 268.4L1427.1 264.6L1432.5 268.4L1437.9 264.6L1443.3 268.4" fill="none" stroke="#eaf5ff" stroke-width="1.300" stroke-linejoin="round"/><rect x="1488" y="321.5" width="92.5" height="4" fill="#d2d2d4" stroke="#9a9a9e" stroke-width="1"/><rect x="1487.5" y="329" width="50.9575" height="7" fill="#1a73dc"/><rect x="1538.46" y="329" width="42.5425" height="7" fill="#1fc58a"/><rect x="1624" y="343.5" width="92.5" height="4" fill="#d2d2d4" stroke="#9a9a9e" stroke-width="1"/><rect x="1623.5" y="351" width="21.0375" height="7" fill="#1a73dc"/><rect x="1644.54" y="351" width="72.4625" height="7" fill="#1fc58a"/><rect x="1760" y="365.5" width="92.5" height="4" fill="#d2d2d4" stroke="#9a9a9e" stroke-width="1"/><rect x="1759.5" y="373" width="80.8775" height="7" fill="#1a73dc"/><rect x="1840.38" y="373" width="12.6225" height="7" fill="#1fc58a"/><rect x="1896" y="387.5" width="92.5" height="4" fill="#d2d2d4" stroke="#9a9a9e" stroke-width="1"/><rect x="1895.5" y="395" width="56.1" height="7" fill="#1a73dc"/><rect x="1951.6" y="395" width="37.4" height="7" fill="#1fc58a"/><path d="M1195 245.500h14" stroke="#111" stroke-width="1.300"/><path d="M1215.500 245.500l-8-3.700v7.400z" fill="#000"/><path d="M1308.5 247V251.5H1337V266.5H1346.5" fill="none" stroke="#111" stroke-width="1.300"/><path d="M1351.5 266.5l-8 -3.700v7.400z" fill="#000"/><path d="M1444.5 269V273.5H1473V332.5H1482.5" fill="none" stroke="#111" stroke-width="1.300"/><path d="M1487.5 332.5l-8 -3.700v7.400z" fill="#000"/><path d="M1580.5 335V339.5H1609V354.5H1618.5" fill="none" stroke="#111" stroke-width="1.300"/><path d="M1623.5 354.5l-8 -3.700v7.400z" fill="#000"/><path d="M1716.5 357V361.5H1745V376.5H1754.5" fill="none" stroke="#111" stroke-width="1.300"/><path d="M1759.5 376.5l-8 -3.700v7.400z" fill="#000"/><path d="M1852.5 379V383.5H1881V398.5H1890.5" fill="none" stroke="#111" stroke-width="1.300"/><path d="M1895.5 398.5l-8 -3.700v7.400z" fill="#000"/></svg>
<div class="lb b" style="left:622px;top:99px">Земляные работы</div>
<div class="lb" style="right:491px;top:122px">Вертикальная планировка территории</div>
<div class="lb" style="left:486px;top:144px">Устройство котлована</div>
<div class="lb" style="left:622px;top:166px">Устройство песчаного основания</div>
<div class="lb" style="left:758px;top:232px">Устройство буронабивных свай захватка 1</div>
<div class="lb" style="left:894px;top:254px">Устройство буронабивных свай захватка 2</div>
<div class="lb" style="left:1030px;top:276px">Устройство буронабивных свай захватка 3</div>
<div class="abs" style="left:1072px;top:51px;width:2px;height:480px;background:#fff"></div></div>
<div class="tab on" style="left:93px">Карточка работы</div>
<div class="tab" style="left:324px">Связи работы</div>
<div class="tab" style="left:531px">Связанные графики</div>
<div class="tab" style="left:787px">Справочники</div>
<div class="tab" style="left:989px">Суточное планирование</div>
<div class="tab" style="left:1280px">Фото / Документация</div>
<div class="tab" style="left:1550px">Запросы и поручения</div>
<div class="tab" style="left:1820px">Табели</div>
<div id="tabul" class="abs"></div>
<div class="lbl b" style="left:61px;top:688px">Тип</div>
<div class="lbl b" style="left:61px;top:718px">Шифр</div>
<div class="lbl b" style="left:61px;top:748px">Статус</div>
<div class="inp" style="left:121px;top:686px;width:162px">Работа<svg viewBox="0 0 10 5"><path d="M0 0h10L5 5z" fill="#45454b"/></svg></div>
<div class="inp" style="left:121px;top:716px;width:162px">01.02</div>
<div class="inp" style="left:121px;top:746px;width:162px">Завершена<svg viewBox="0 0 10 5"><path d="M0 0h10L5 5z" fill="#45454b"/></svg></div>
<div id="title" class="abs">Устройство котлована</div>
<div class="lbl" style="left:292px;top:747px;letter-spacing:.5px">Сценарий</div>
<div id="scen" class="abs"></div>
<div class="lbl" style="left:482px;top:747px;font-size:13.5px;letter-spacing:.1px">Сценария нет</div>
<svg class="abs" style="left:799px;top:747px;width:16px;height:16px" viewBox="0 0 16 16" fill="none" stroke="#222" stroke-width="1.200" stroke-linejoin="round"><path d="M6.500 1h3l.6 1.700 1.800-.8 2.100 2.100-.8 1.800 1.800.7v3l-1.800.7.8 1.800-2.100 2.100-1.800-.8-.6 1.700h-3l-.6-1.700-1.800.8-2.100-2.100.8-1.800L1 9.500v-3l1.800-.7L2 4l2.100-2.100 1.800.8z"/><path d="M5 5.500L7.500 8 5 10.500M8.500 5.500L11 8l-2.500 2.500"/></svg>
<div id="card" class="abs">
<div class="hd">PLAN-R: 7 дней</div></div>
<div class="pin" style="left:860px"></div>
<div class="pin" style="left:933px"></div>
<svg class="abs" style="left:842px;top:727px;width:17px;height:17px" viewBox="0 0 17 17" fill="none" stroke="#333" stroke-width="1.200" stroke-linecap="round"><path d="M2 3.500L4 1.500M3 2.500l7 7M8 11.500l3.500-3.500 4 4c.5 2-1.500 4-3.500 3.500z"/></svg>
<div class="inp" style="left:866px;top:724px;width:72px;padding:0;text-align:center;font-size:15px;line-height:20px;letter-spacing:0">16</div>
<div class="lbl" style="left:946px;top:726px;font-size:12px">ч.</div>
<div class="lbl" style="left:829px;top:748px;width:146px;text-align:center;font-size:12px;letter-spacing:.35px">Календарных: 2 дн.</div>
<div id="bar" class="abs"><span class="abs" style="left:19px">02.05.2025 09:00</span><span class="abs" style="left:443px;letter-spacing:.3px;font-size:14.5px">100 %</span><span class="abs" style="right:30px">03.05.2025 18:00</span></div>
<svg class="abs" style="left:205px;top:782px;width:11px;height:12px" viewBox="0 0 11 12" fill="none" stroke="#fff" stroke-width="1.300"><rect x=".7" y="1.700" width="9.600" height="9.600" rx="1"/><path d="M.7 4h9.600" stroke-width="1.800"/><path d="M3 .3v1.500M8 .3v1.500" stroke-width="1.200"/></svg>
<svg class="abs" style="left:953px;top:782px;width:11px;height:12px" viewBox="0 0 11 12" fill="none" stroke="#fff" stroke-width="1.300"><rect x=".7" y="1.700" width="9.600" height="9.600" rx="1"/><path d="M.7 4h9.600" stroke-width="1.800"/><path d="M3 .3v1.500M8 .3v1.500" stroke-width="1.200"/></svg>
<div class="lbl b" style="left:53px;top:816px;letter-spacing:.1px">Ограничения</div>
<div class="abs" style="left:206px;top:823px;width:769px;height:3px;background:#b4b4bc;border-radius:1px"></div>
<div class="lbl" style="left:53px;top:844px;letter-spacing:.25px">Начало</div>
<div class="inp" style="left:120px;top:841px;width:149px;line-height:21px">Не раньше<svg viewBox="0 0 10 5"><path d="M0 0h10L5 5z" fill="#45454b"/></svg></div>
<div class="dt" style="left:277px;top:842px">02.05.2025 09:00</div>
<svg class="abs" style="left:414px;top:846px;width:12px;height:13.0909px" viewBox="0 0 11 12" fill="none" stroke="#222" stroke-width="1.300"><rect x=".7" y="1.700" width="9.600" height="9.600" rx="1"/><path d="M.7 4h9.600" stroke-width="1.800"/><path d="M3 .3v1.500M8 .3v1.500" stroke-width="1.200"/></svg>
<svg class="abs" style="left:429px;top:845px;width:16px;height:16px" viewBox="0 0 16 16" fill="none" stroke="#28c346" stroke-width="1.300" stroke-linejoin="round"><path d="M1 3a2 2 0 0 1 2-2h8.500L15 4.500V13a2 2 0 0 1-2 2H3a2 2 0 0 1-2-2z"/><path d="M4.500 1v4h6V1"/><circle cx="8" cy="10.500" r="1.600"/></svg>
<div class="lbl" style="left:558px;top:844px;letter-spacing:.65px">Окончание</div>
<div class="inp" style="left:651px;top:841px;width:149px;line-height:21px">Не позже<svg viewBox="0 0 10 5"><path d="M0 0h10L5 5z" fill="#45454b"/></svg></div>
<div class="dt" style="left:808px;top:842px">03.05.2025 18:00</div>
<svg class="abs" style="left:944px;top:846px;width:12px;height:13.0909px" viewBox="0 0 11 12" fill="none" stroke="#222" stroke-width="1.300"><rect x=".7" y="1.700" width="9.600" height="9.600" rx="1"/><path d="M.7 4h9.600" stroke-width="1.800"/><path d="M3 .3v1.500M8 .3v1.500" stroke-width="1.200"/></svg>
<svg class="abs" style="left:959px;top:845px;width:16px;height:16px" viewBox="0 0 16 16" fill="none" stroke="#28c346" stroke-width="1.300" stroke-linejoin="round"><path d="M1 3a2 2 0 0 1 2-2h8.500L15 4.500V13a2 2 0 0 1-2 2H3a2 2 0 0 1-2-2z"/><path d="M4.500 1v4h6V1"/><circle cx="8" cy="10.500" r="1.600"/></svg>
<div class="btn" style="left:53px"><svg viewBox="0 0 14 12"><path d="M6.500 1L1.500 6l5 5M12.500 1L7.500 6l5 5"/></svg></div>
<div class="btn" style="left:935px"><svg viewBox="0 0 14 12"><path d="M1.500 1l5 5-5 5M7.500 1l5 5-5 5"/></svg></div>
<div class="lbl" style="left:109px;top:881px;letter-spacing:.5px">Начало как можно раньше</div>
<div class="lbl" style="left:718px;top:881px;letter-spacing:.65px">Окончание как можно позже</div>
<div class="abs" style="left:983px;top:677px;width:1px;height:235px;background:#b4b4bc"></div>
<div class="lbl b" style="left:992px;top:697px">Атрибуты</div>
<div class="abs" style="left:1082px;top:686px;width:832px;height:40px;border:1px solid #b9b9c0;border-radius:4px;background:#fff"></div>
<div class="al" style="left:1094px;top:696px;color:#75757d">Поиск</div>
<div class="al" style="left:992px;top:747px">Шифр</div>
<div class="al" style="left:1457.500px;top:747px">01.02</div>
<div class="ar" style="top:776px"></div>
<div class="al" style="left:992px;top:789px">Наименование</div>
<div class="al" style="left:1457.500px;top:789px">Устройство котлована</div>
<div class="ar" style="top:818px"></div>
<div class="al" style="left:992px;top:831px">Старт</div>
<div class="al" style="left:1457.500px;top:831px">02.05.2025 09:00</div>
<div class="ar" style="top:860px"></div>
<div class="al" style="left:992px;top:873px">Финиш</div>
<div class="al" style="left:1457.500px;top:873px">03.05.2025 18:00</div>
<div class="ar" style="top:902px"></div>
<div id="menu" class="abs"><svg class="ic " viewBox="0 0 24 24" style="left:16px;top:12px;width:24px;height:24px;"><g transform="translate(12,12.200) rotate(-17) scale(.96) translate(-12,-12)" stroke-width="2.300"><path d="M10 13a5 5 0 0 0 7.540.540l3-3a5 5 0 0 0-7.070-7.070l-1.720 1.710"/><path d="M14 11a5 5 0 0 0-7.540-.540l-3 3a5 5 0 0 0 7.070 7.070l1.710-1.710"/></g></svg>
<div class="mi" style="top:13.5px;letter-spacing:0px">Создание связей</div><svg class="ic " viewBox="0 0 24 24" style="left:16px;top:60px;width:24px;height:24px;"><path d="M1.200 1.500h10.500M6.700 12h10.500M12.200 22.500h10.500" stroke-width="2.800"/><path d="M11.800 4.500v4.300M10.200 7.300l1.600 1.700 1.600-1.700M17 15v4.300M15.400 17.800l1.600 1.700 1.600-1.700" stroke-width="1.200"/></svg>
<div class="mi" style="top:61.5px;letter-spacing:0px">Связь работ по чекбоксам</div><svg class="ic " viewBox="0 0 24 24" style="left:16px;top:108px;width:24px;height:24px;"><path d="M1.200 1.600h10.800M11.800 22h10.200" stroke-width="2.800"/><path d="M8.300 8.200l7.400 7.400M15.700 8.200l-7.400 7.400" stroke-width="2.100"/><path d="M16 1.600h3a2.800 2.800 0 0 1 2.800 2.800v6M20.200 8.800l1.600 1.700 1.600-1.700M1 12v7a2.800 2.800 0 0 0 2.800 2.800h3M5.200 20.200l1.700 1.600-1.700 1.600" stroke-width="1.200"/></svg>
<div class="mi" style="top:109.5px;letter-spacing:0px">Растворить работу</div><svg class="ic " viewBox="0 0 24 24" style="left:16px;top:156px;width:24px;height:24px;"><g transform="translate(6,16.800) rotate(-17) scale(.600) translate(-12,-12)" stroke-width="3"><path d="M10 13a5 5 0 0 0 7.540.540l3-3a5 5 0 0 0-7.070-7.070l-1.720 1.710"/><path d="M14 11a5 5 0 0 0-7.540-.540l-3 3a5 5 0 0 0 7.070 7.070l1.710-1.710"/></g><path d="M14.200.5l8.800 8.800M23 .5l-8.800 8.800" stroke-width="1.300"/></svg>
<div class="mi" style="top:157.5px;letter-spacing:0px">Удаление связей</div><svg class="ic " viewBox="0 0 24 24" style="left:16px;top:203.5px;width:24px;height:24px;"><ellipse cx="6" cy="14.200" rx="5.200" ry="2.200" stroke-width="1.700"/><path d="M.8 14.200v7c0 1.200 2.300 2.200 5.200 2.200s5.200-1 5.200-2.200v-7M.8 17.700c0 1.200 2.300 2.200 5.200 2.200s5.200-1 5.200-2.200" stroke-width="1.900"/><path d="M15.500 20c2.800-.5 4-2.500 4.300-5.500M17.600 15.800l2.300-2 1.500 2.600" stroke-width="1.200"/><g stroke-width="1.100"><ellipse cx="19.500" cy="2.800" rx="4" ry="1.700"/><path d="M15.500 2.800v5.400c0 .9 1.800 1.700 4 1.700s4-.8 4-1.700V2.800M15.500 5.500c0 .9 1.800 1.700 4 1.700s4-.8 4-1.700"/></g></svg>
<div class="mi" style="top:205.5px;letter-spacing:0px">Передать назначения справочников в атрибуты работ</div><svg class="ic " viewBox="0 0 24 24" style="left:16px;top:251.5px;width:24px;height:24px;"><ellipse cx="6" cy="14.200" rx="5.200" ry="2.200" stroke-width="1.700"/><path d="M.8 14.200v7c0 1.200 2.300 2.200 5.200 2.200s5.200-1 5.200-2.200v-7M.8 17.700c0 1.200 2.300 2.200 5.200 2.200s5.200-1 5.200-2.200" stroke-width="1.900"/><path d="M15.500 20c2.800-.5 4-2.500 4.300-5.500M17.600 15.800l2.300-2 1.500 2.600" stroke-width="1.200"/><path d="M15.800 10l3.900-8.800 3.900 8.800M17.200 7h5" stroke-width="1.500"/></svg>
<div class="mi" style="top:253.5px;letter-spacing:0.12px">Экспорт назначений справочников в другую версию</div><svg class="ic " viewBox="0 0 24 24" style="left:16px;top:300px;width:24px;height:24px;"><path d="M0 6.200h9.400M4.700 1.500v9.400M14 6.200h10M1.300 15.800l7.400 7.400M8.700 15.800l-7.400 7.400M14 17h10M14 21.700h10" stroke-width="2.200" stroke-linecap="butt"/></svg>
<div class="mi" style="top:301.5px;letter-spacing:-0.07px">Расчет по графику</div><svg class="ic " viewBox="0 0 24 24" style="left:415px;top:302px;width:20px;height:20px;"><path d="M7.500 2l10 10-10 10" stroke-width="1.500"/></svg><svg class="ic " viewBox="0 0 24 24" style="left:16px;top:348px;width:24px;height:24px;"><rect x="1" y="9" width="14.700" height="14" rx="2.500" stroke-width="2.100"/><path d="M8.500 8.500V4.200a2.500 2.500 0 0 1 2.500-2.500h9.100a2.500 2.500 0 0 1 2.500 2.500v8.700a2.500 2.500 0 0 1-2.500 2.500H16" stroke-width="2.100"/><path d="M4.500 20.300l3.800-8.300 3.800 8.300M5.800 17.500h5" stroke-width="2"/></svg>
<div class="mi" style="top:349.5px;letter-spacing:-0.13px">Глобальная замена атрибутов</div><svg class="ic " viewBox="0 0 24 24" style="left:415px;top:350px;width:20px;height:20px;"><path d="M7.500 2l10 10-10 10" stroke-width="1.500"/></svg><svg class="ic " viewBox="0 0 24 24" style="left:16px;top:396px;width:24px;height:24px;"><circle cx="8.900" cy="10" r="1.300" fill="#4b4b53" stroke-width=".8"/><path d="M1.500 15.500l2-3.500 5 .8 1.700 3.200-2.200 1.200-1-1.700-2.800-.3-1 1.500z" fill="#4b4b53" stroke-width="1"/><path d="M3.500 16.500L.8 23.800M5.300 16.800l2 2.700-.5 4.300M8.500 16.500l6.500 5.200" stroke-width="1.600"/><path d="M9.500 24.200l6-6.200 4 6.200z" fill="#4b4b53" stroke-width=".8"/><path d="M22.700 6.600a4.800 4.800 0 1 1-1.300-4.100M22.900.6l-.3 3.200-3.100-.5M18 3.300v3l2 1.300" stroke-width="1.300"/></svg>
<div class="mi" style="top:397.5px;letter-spacing:0px">Расчет оставшейся длительности по интенсивности</div><svg class="ic " viewBox="0 0 24 24" style="left:16px;top:444px;width:24px;height:24px;"><rect x="1" y="11.800" width="12" height="11.700" rx="2.300" stroke-width="2.100"/><path d="M4 17.800l2.300 2.300 4.600-4.800" stroke-width="2"/><path d="M14.300 2.300h9" stroke-width="1.500"/><path d="M15.800 4.500v3.300a1.500 1.500 0 0 0 1.500 1.500h3a1.500 1.500 0 0 0 1.500-1.500V4.500" stroke-width="1.500"/><path d="M16.300 1.800c.5-.9 1.300-1.200 2.500-1.200s2 .3 2.500 1.200z" fill="#4b4b53" stroke-width=".6"/></svg>
<div class="mi" style="top:445.5px;letter-spacing:0px">Удаление узлов/работ по чекбоксам</div><svg class="ic " viewBox="0 0 24 24" style="left:16px;top:492px;width:24px;height:24px;"><path d="M7 3.500H6a2.500 2.500 0 0 0-2.500 2.500v14.800a2.500 2.500 0 0 0 2.500 2.500h11.700a2.500 2.500 0 0 0 2.500-2.500V6a2.500 2.500 0 0 0-2.500-2.500H17" stroke-width="2.200"/><rect x="7" y=".8" width="10" height="6" rx="1" fill="#4b4b53" stroke-width=".6"/><path d="M8.200 11.200l7.600 7.600M15.800 11.200l-7.600 7.600" stroke-width="1.900"/></svg>
<div class="mi" style="top:493.5px;letter-spacing:0px">Очистить оценочные данные</div>
<div class="kbd">F2</div></div>
<svg class="abs" style="left:0;top:0;width:1918px;height:912px;pointer-events:none" viewBox="0 0 1918 912"><path d="M52 117.500l8-8" stroke="#55555c" stroke-width="1.200" fill="none"/><path d="M67.500 110V52" stroke="#000" stroke-width="2.800" fill="none"/><path d="M67.500 41.500l5.800 11.800h-11.600z" fill="#000"/><ellipse cx="68.500" cy="127.400" rx="15.900" ry="17.900" fill="#fff" stroke="#000" stroke-width="3"/><path d="M436 237.400H379" stroke="#000" stroke-width="2.800" fill="none"/><path d="M367.500 237.400l12.300-5.900v11.800z" fill="#000"/><ellipse cx="451.400" cy="237.800" rx="16" ry="17.400" fill="#fff" stroke="#000" stroke-width="3"/><path d="M694 23.200H751" stroke="#000" stroke-width="2.800" fill="none"/><path d="M762.300 23.200l-12.300-5.900v11.800z" fill="#000"/><ellipse cx="678" cy="23.200" rx="16" ry="17.700" fill="#fff" stroke="#000" stroke-width="3"/><path d="M1012 162.400H955" stroke="#000" stroke-width="2.800" fill="none"/><path d="M943.700 162.400l12.300-5.900v11.800z" fill="#000"/><ellipse cx="1027.800" cy="162.900" rx="15.800" ry="17.500" fill="#fff" stroke="#000" stroke-width="3"/><text x="68.5" y="134.1" text-anchor="middle" font-family="DejaVu Sans, Liberation Sans, sans-serif" font-size="20" fill="#000">1</text><text x="451.4" y="244.8" text-anchor="middle" font-family="Liberation Sans, sans-serif" font-size="19.5" fill="#000">2</text><text x="678" y="30.2" text-anchor="middle" font-family="Liberation Sans, sans-serif" font-size="19.5" fill="#000">3</text><text x="1027.8" y="169.9" text-anchor="middle" font-family="Liberation Sans, sans-serif" font-size="19.5" fill="#000">4</text></svg></body></html>
